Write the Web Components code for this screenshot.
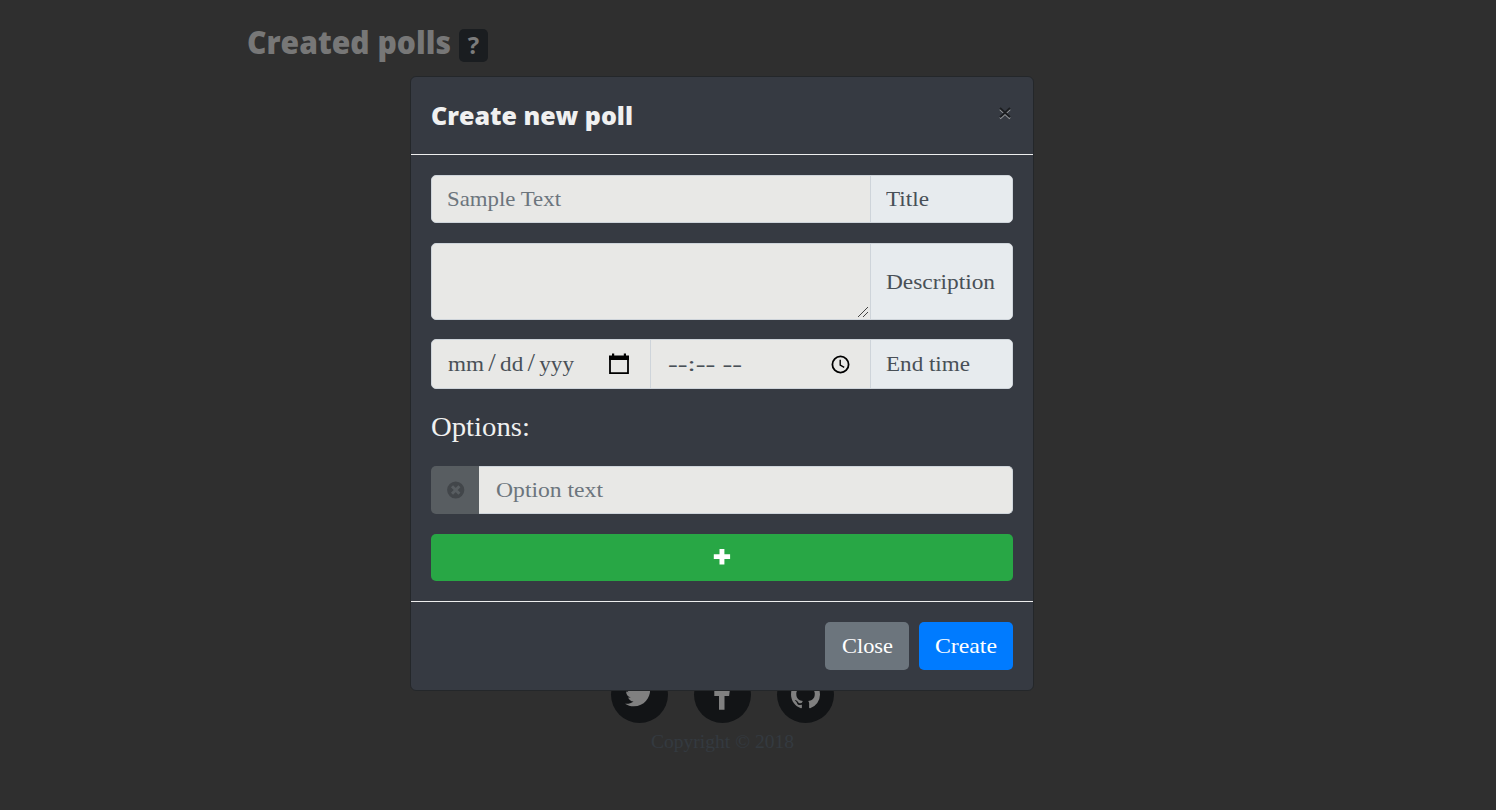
<!DOCTYPE html>
<html lang="en">
<head>
<meta charset="utf-8">
<title>Created polls</title>
<style>
html,body{margin:0;height:100%;overflow:hidden;background:#2f2f2f;font-family:"Liberation Serif",serif}
</style>
</head>
<body>
<poll-page></poll-page>
<poll-modal></poll-modal>
<script>
const define = (name, html, ready) => customElements.define(name, class extends HTMLElement {
  connectedCallback() {
    if (this.shadowRoot) return;
    const t = document.createElement('template');
    t.innerHTML = html;
    this.attachShadow({mode: 'open'}).append(t.content.cloneNode(true));
    if (ready) ready(this);
  }
});

// A line of text widened to fill a given width.
define('fit-text', `<style>:host{display:inline-block;white-space:pre;line-height:1.5;text-align:left}span{display:inline-block;transform-origin:0 50%}::slotted(b){font-weight:400;font-size:25px;line-height:0;margin:0 4px}</style><span><slot></slot></span>`, el => {
  const w = +el.getAttribute('w'), s = el.shadowRoot.querySelector('span');
  s.style.transform = 'scaleX(' + (w / s.getBoundingClientRect().width).toFixed(4) + ')';
  el.style.width = w + 'px';
});

define('social-link', `<style>:host{display:flex;align-items:center;justify-content:center;width:57px;height:57px;border-radius:50%;background:#121416;color:#808080}</style><slot></slot>`);

define('poll-page', `<style>
:host{display:flex;flex-direction:column;height:810px;box-sizing:border-box;padding-top:19px}
h1{display:flex;align-items:center;gap:8px;margin:0 0 0 247px;height:46px;font:800 31px/46px "Open Sans",sans-serif;color:#777}
h1 fit-text{line-height:46px}
.help{width:29px;height:33px;border-radius:5px;background:#1a1d20;color:#7c7c7c;font:700 24px/32px "Open Sans",sans-serif;text-align:center;margin-top:6px}
footer{margin-top:601px;width:1444px;display:flex;flex-direction:column;align-items:center}
nav{display:flex;gap:26px}
svg{display:block;fill:currentColor}
.copy{font-size:18.5px;color:#343a40;margin-top:6px}
</style>
<h1><fit-text w="204">Created polls</fit-text><span class="help">?</span></h1>
<footer><nav>
<social-link><svg width="28" height="28" viewBox="0 0 512 512"><path d="M459.37 151.716c.325 4.548.325 9.097.325 13.645 0 138.72-105.583 298.558-298.558 298.558-59.452 0-114.68-17.219-161.137-47.106 8.447.974 16.568 1.299 25.34 1.299 49.055 0 94.213-16.568 130.274-44.832-46.132-.975-84.792-31.188-98.112-72.772 6.498.974 12.995 1.624 19.818 1.624 9.421 0 18.843-1.3 27.614-3.573-48.081-9.747-84.143-51.98-84.143-102.985v-1.299c13.969 7.797 30.214 12.67 47.431 13.319-28.264-18.843-46.781-51.005-46.781-87.391 0-19.492 5.197-37.36 14.294-52.954 51.655 63.675 129.3 105.258 216.365 109.807-1.624-7.797-2.599-15.918-2.599-24.04 0-57.828 46.782-104.934 104.934-104.934 30.213 0 57.502 12.67 76.67 33.137 23.715-4.548 46.456-13.32 66.599-25.34-7.798 24.366-24.366 44.833-46.132 57.827 21.117-2.273 41.584-8.122 60.426-16.243-14.292 20.791-32.161 39.308-52.628 54.253z"/></svg></social-link>
<social-link><svg width="18" height="30" viewBox="0 0 18 30"><path d="M17 .2v4.700h-2.800c-2.200 0-2.700 1-2.700 2.600v3.100h5.300l-.7 5.300h-4.600v13.800H6V15.900H1.300v-5.300H6V6.600C6 2 8.800-.4 13-.4c2 0 3.600.1 4 .6z"/></svg></social-link>
<social-link><svg width="29" height="29" viewBox="0 0 16 16"><path d="M8 0C3.58 0 0 3.58 0 8c0 3.54 2.29 6.53 5.47 7.59.4.07.55-.17.55-.38 0-.19-.01-.82-.01-1.49-2.01.37-2.53-.49-2.69-.94-.09-.23-.48-.94-.82-1.13-.28-.15-.68-.52-.01-.53.63-.01 1.08.58 1.23.82.72 1.21 1.87.87 2.33.66.07-.52.28-.87.51-1.07-1.78-.2-3.64-.89-3.64-3.95 0-.87.31-1.59.82-2.15-.08-.2-.36-1.02.08-2.12 0 0 .67-.21 2.2.82.64-.18 1.32-.27 2-.27s1.36.09 2 .27c1.53-1.04 2.2-.82 2.2-.82.44 1.1.16 1.92.08 2.12.51.56.82 1.27.82 2.15 0 3.07-1.87 3.75-3.65 3.95.29.25.54.73.54 1.48 0 1.07-.01 1.93-.01 2.2 0 .21.15.46.55.38A8.01 8.01 0 0016 8c0-4.42-3.58-8-8-8z"/></svg></social-link>
</nav><fit-text class="copy" w="143">Copyright © 2018</fit-text></footer>`);

// A row of joined fields with an optional label at its end.
define('input-group', `<style>
:host{display:flex;box-sizing:border-box;border:1px solid #ced4da;border-radius:5px;overflow:hidden;background:#e8e8e6;color:#495057;font-size:21.5px}
.fields{flex:1;display:flex;min-width:0}
.label{width:126px;padding-left:15px;border-left:1px solid #ced4da;background:#e7ebee;display:flex;align-items:center}
:host([plain]) .label{display:none}
:host([plain]){border-left:0;border-radius:0 5px 5px 0}
</style><div class="fields"><slot></slot></div><div class="label"><slot name="label"></slot></div>`);

define('input-field', `<style>
:host{flex:1;display:flex;align-items:center;justify-content:space-between;box-sizing:border-box;padding:0 16px 0 15px;min-width:0}
:host([hint]){color:#6c757d}
:host([divided]){border-left:1px solid #ced4da}
:host([area]){align-items:flex-end;justify-content:flex-end;padding:0 1px 1px}
</style><slot></slot>`);

define('ui-button', `<style>
:host{display:flex;align-items:center;justify-content:center;box-sizing:border-box;height:48px;border-radius:5px;background:var(--bg);color:#fff;font-size:21.5px}
</style><slot></slot>`);

define('poll-modal', `<style>
:host{position:absolute;left:410px;top:76px;width:624px;height:615px;box-sizing:border-box;border:1px solid #24272a;border-radius:6px;background:#363a42;color:#f0f0f0;display:flex;flex-direction:column}
header{height:77px;display:flex;align-items:center;justify-content:space-between;padding:0 21px 0 20px;border-bottom:1px solid #eee}
h2{margin:0;font:800 25px/38px "Open Sans",sans-serif}
svg{display:block}
.x{margin-top:-5px}
main{flex:1;display:flex;flex-direction:column;padding:20px 20px 0}
.title{height:48px}.desc{height:77px;margin-top:20px}.desc fit-text{padding-top:2px}
.time{height:50px;margin-top:19px}
.date{flex:none;width:218px;padding:0 20px 0 16px}
.clock{padding:0 19px 0 17px}
.options{font-size:27px;height:38px;margin:19px 0 20px}
.options fit-text{line-height:38px}
.option{display:flex;height:48px}
.remove{width:47px;padding-left:1px;border-radius:5px 0 0 5px;background:#585d61;display:flex;align-items:center;justify-content:center}
.option input-group{flex:1}
.add{height:47px;margin-top:20px;--bg:#28a745}
footer{height:89px;border-top:1px solid #eee;box-sizing:border-box;padding:20px 20px 0;display:flex;justify-content:flex-end;gap:10px}
.close{width:84px;--bg:#6c757d}.create{width:94px;--bg:#007bff}
</style>
<header><h2><fit-text w="202">Create new poll</fit-text></h2>
<svg class="x" width="14" height="14" viewBox="0 0 14 14" fill="none" stroke-width="1.900"><path d="M2 3.200l10 9.300M12 3.200l-10 9.300" stroke="#96999c"/><path d="M2 2l10 9.300M12 2l-10 9.300" stroke="#1b1d20"/></svg></header>
<main>
<input-group class="title"><input-field hint><fit-text w="114">Sample Text</fit-text></input-field><fit-text slot="label" w="43">Title</fit-text></input-group>
<input-group class="desc"><input-field area><svg width="12" height="12" viewBox="0 0 12 12" stroke="#444" stroke-width="1"><path d="M1 11L11 1M6 11l5-5"/></svg></input-field><fit-text slot="label" w="109">Description</fit-text></input-group>
<input-group class="time">
<input-field class="date"><fit-text w="126">mm<b>/</b>dd<b>/</b>yyy</fit-text><svg width="22" height="22" viewBox="0 0 22 22"><path d="M2 5h18v15.200H2z" fill="none" stroke="#000" stroke-width="1.800"/><path d="M1 2.500h20V7H1zM4 .5h2.200v3H4zM15.800.5H18v3h-2.200z"/></svg></input-field>
<input-field divided class="clock"><fit-text w="74">--:-- --</fit-text><svg width="20" height="20" viewBox="0 0 20 20" fill="none" stroke="#000"><circle cx="9.500" cy="10.500" r="8.100" stroke-width="1.800"/><path d="M9.200 5.700v5.300l4 2.400" stroke-width="1.400"/></svg></input-field>
<fit-text slot="label" w="84">End time</fit-text></input-group>
<div class="options"><fit-text w="99">Options:</fit-text></div>
<div class="option"><div class="remove"><svg width="18" height="18" viewBox="0 0 18 18"><circle cx="8.700" cy="9" r="8.600" fill="#42464a"/><path d="M5 5.300l7.400 7.400m0-7.400l-7.400 7.400" stroke="#585d61" stroke-width="3"/></svg></div>
<input-group plain><input-field hint style="padding-left:17px"><fit-text w="107">Option text</fit-text></input-field></input-group></div>
<ui-button class="add"><svg width="18" height="18" viewBox="0 0 18 18"><path d="M6.500 0h4.900v5.300h5.700v4.600h-5.700v5.700H6.500V9.900H.8V5.300h5.700z" fill="#fff"/></svg></ui-button>
</main>
<footer><ui-button class="close"><fit-text w="51">Close</fit-text></ui-button><ui-button class="create"><fit-text w="62">Create</fit-text></ui-button></footer>`);
</script>
</body>
</html>
